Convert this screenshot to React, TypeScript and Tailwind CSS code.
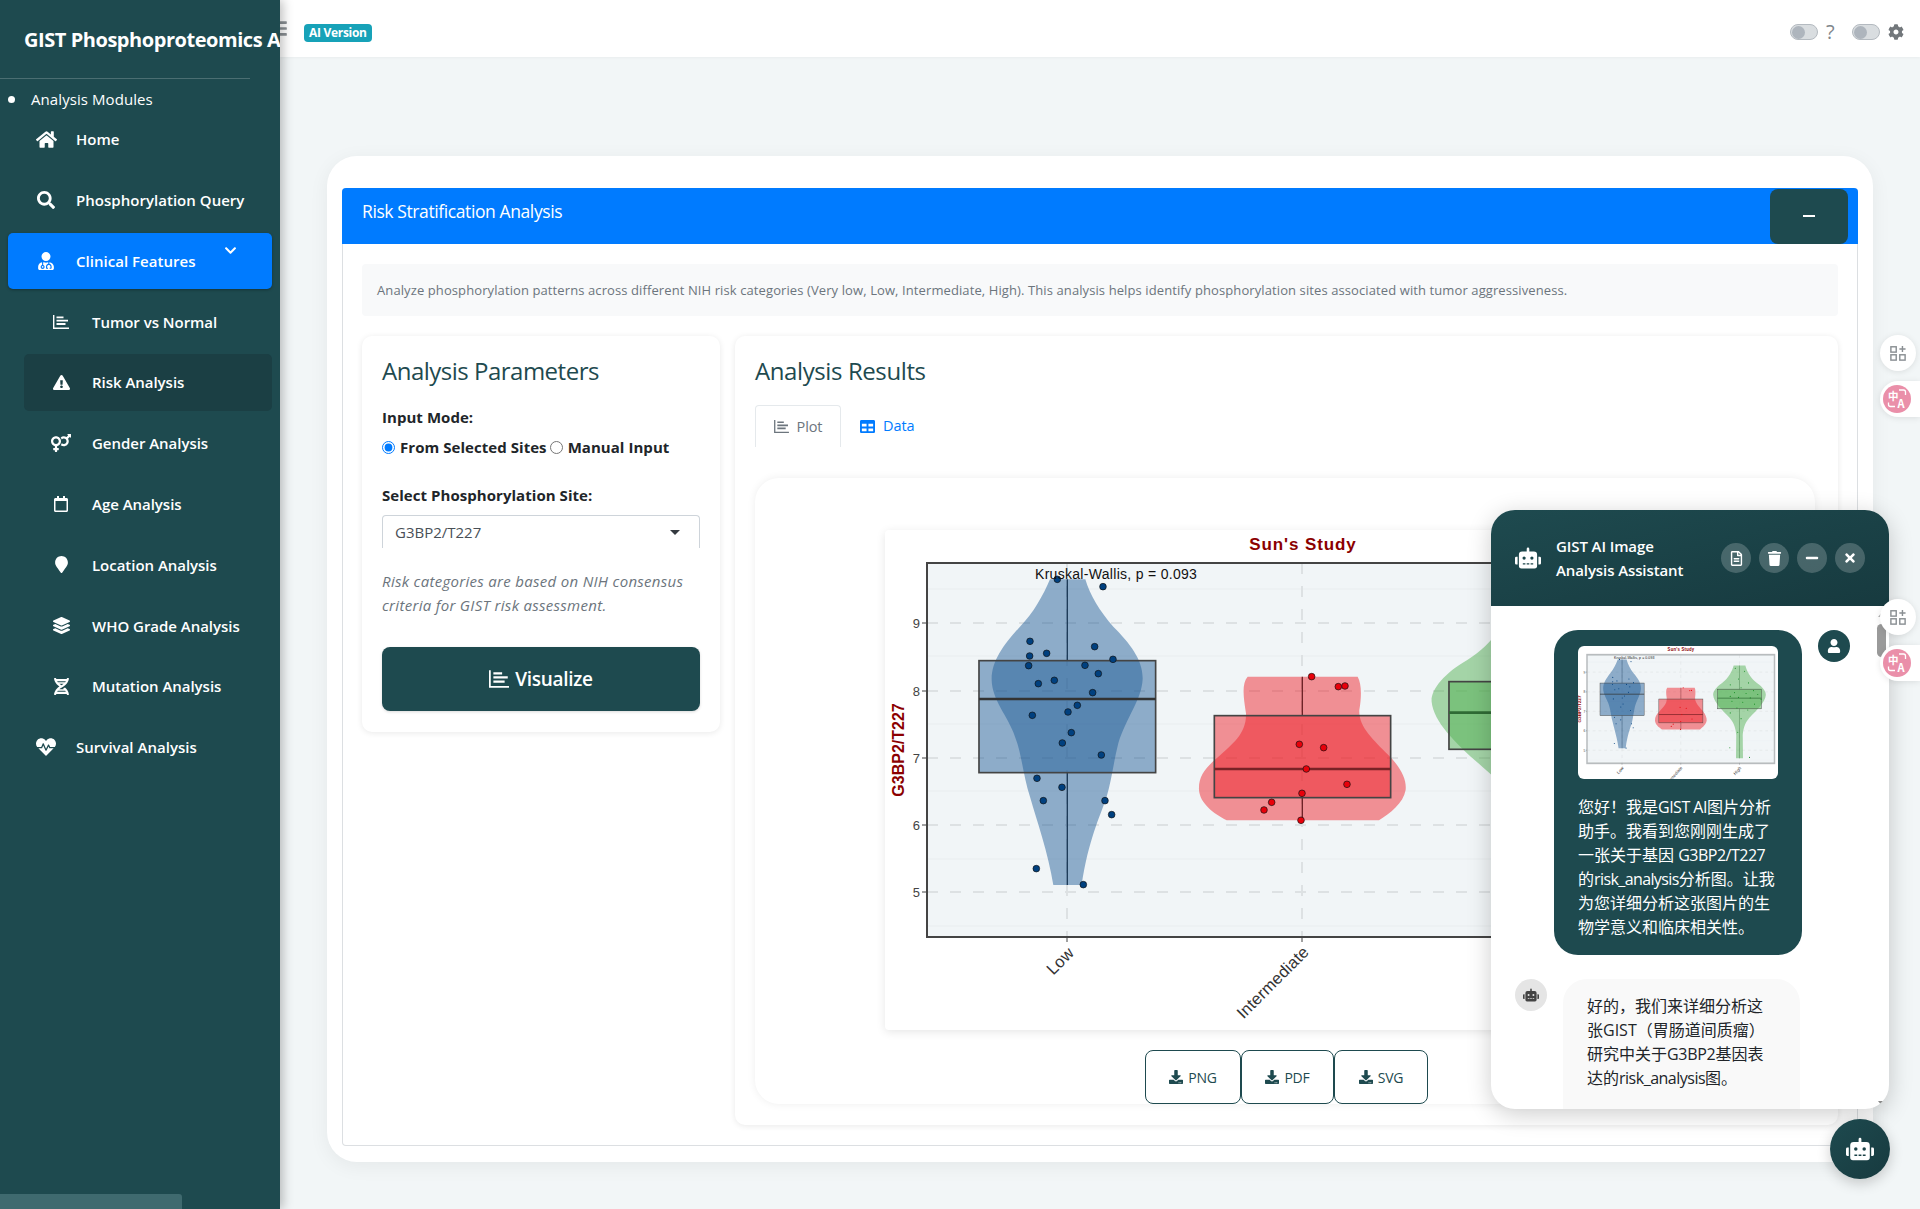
import {
  FaHome, FaSearch, FaUserMd, FaExclamationTriangle, FaVenusMars, FaRegCalendar,
  FaMapMarker, FaLayerGroup, FaDna, FaHeartbeat, FaChevronDown, FaTable, FaDownload, FaRobot,
  FaRegFileAlt, FaTrash, FaMinus, FaTimes, FaUser, FaCog, FaBars,
} from "react-icons/fa";

const lowPoints = [
  [532, 178], [669, 200], [450, 364], [644, 380], [500, 400], [449, 408], [699, 418], [615, 436], [446, 437],
  [655, 461], [523, 481], [475, 491], [638, 518], [592, 556], [564, 576], [457, 586], [574, 638], [547, 669],
  [664, 705], [471, 775], [546, 802], [490, 842], [675, 842], [695, 884], [469, 1046], [610, 1094],
];
const midPoints = [
  [395, 470], [475, 500], [495, 498], [358, 673], [431, 683], [379, 747], [501, 793], [366, 820], [275, 847],
  [252, 870], [363, 901],
];
const highPoints = [
  [1020, 270], [1130, 300], [1060, 380], [1180, 420], [960, 440], [1090, 470], [1240, 500], [1010, 520],
  [1150, 530], [1290, 540], [960, 560], [1060, 570], [1200, 575], [1330, 590], [980, 610], [1110, 620],
  [1250, 640], [1040, 680], [1170, 700], [960, 730], [1090, 790], [1050, 930], [955, 1090], [1190, 1190],
];

function ChartIcon({ className }: { className: string }) {
  return (
    <svg viewBox="0 0 16 14" className={className} fill="currentColor">
      <path d="M0 0h1.4v12.6H16V14H0z" />
      <path d="M3.5 1.5h7v1.8h-7zM3.5 4.8h11.5v1.8H3.5zM3.5 8.1h9v1.8h-9z" />
    </svg>
  );
}

function Chart({ viewBox, mini }: { viewBox: string; mini?: boolean }) {
  const pointRadius = mini ? 6 : 10;
  const pointStroke = mini ? 0 : 2;
  return (
    <svg viewBox={viewBox} preserveAspectRatio="none" className="block w-full h-full font-['Liberation_Sans',sans-serif]">
      <text x="1303" y="550" textAnchor="middle" fontSize="17" fontWeight="700" fill="#8b0000" letterSpacing="0.9">Sun's Study</text>
      <rect x="927" y="563" width="750" height="374" fill="#f1f5f7" />
      {[589, 656, 724, 791, 859, 926].map((y) => (
        <line key={y} x1="927" x2="1677" y1={y} y2={y} stroke="#e9edef" strokeWidth="1" />
      ))}
      {[623, 691, 758, 825, 892].map((y) => (
        <line key={y} x1="927" x2="1677" y1={y} y2={y} stroke="#dde1e3" strokeWidth="2" strokeDasharray="11 12" />
      ))}
      {[1067, 1302, 1537].map((x) => (
        <line key={x} x1={x} x2={x} y1="563" y2="937" stroke="#dde1e3" strokeWidth="2" strokeDasharray="11 12" />
      ))}

      <g transform="translate(880 520) scale(0.3333)">
        <path d="M510 178 L616 178 C630 225 660 275 700 320 C750 370 790 420 788 478 C785 540 740 590 715 670 C700 730 695 780 680 830 C660 890 625 960 605 1095 L520 1095 C505 1000 470 900 450 830 C430 770 425 700 405 650 C385 590 335 540 335 478 C335 420 375 370 420 320 C460 280 490 225 510 178 Z" fill="#1f5b96" fillOpacity="0.48" />
        <path d="M562 178V422M562 758V1095" stroke="#1d3a58" strokeWidth="4" />
        <rect x="297" y="422" width="530" height="336" fill="#1f5b96" fillOpacity="0.48" stroke="#444" strokeWidth="5" />
        <line x1="297" x2="827" y1="537" y2="537" stroke="#333" strokeWidth="8" />
        {lowPoints.map(([x, y]) => (
          <circle key={`${x}-${y}`} cx={x} cy={y} r={pointRadius} fill="#00407f" stroke="#111" strokeWidth={pointStroke} />
        ))}
      </g>

      <g transform="translate(1180 520) scale(0.3333)">
        <path d="M203 470 L533 470 C545 490 545 530 538 570 C535 620 580 660 625 705 C665 745 680 780 677 810 C670 850 630 880 597 901 L140 901 C100 880 60 850 57 810 C55 770 75 745 110 715 C160 670 200 640 198 580 C190 530 185 490 203 470 Z" fill="#ee2027" fillOpacity="0.48" />
        <path d="M367 470V587M367 833V901" stroke="#6d2226" strokeWidth="4" />
        <rect x="103" y="587" width="529" height="246" fill="#ee2027" fillOpacity="0.48" stroke="#444" strokeWidth="5" />
        <line x1="103" x2="632" y1="747" y2="747" stroke="#7a2226" strokeWidth="8" />
        {midPoints.map(([x, y]) => (
          <circle key={`${x}-${y}`} cx={x} cy={y} r={pointRadius} fill="#e8000a" stroke="#111" strokeWidth={pointStroke} />
        ))}

        <path d="M1001 240 L1141 240 C1160 300 1200 370 1280 420 C1350 460 1390 510 1387 545 C1380 620 1280 700 1190 780 C1130 840 1115 900 1110 960 L1113 1200 L1029 1200 L1032 960 C1027 900 1012 840 952 780 C862 700 762 620 755 545 C752 510 792 460 862 420 C942 370 982 300 1001 240 Z" fill="#4fb04f" fillOpacity="0.48" />
        <path d="M1071 240V485M1071 688V1200" stroke="#2f6b35" strokeWidth="4" />
        <rect x="807" y="485" width="528" height="203" fill="#4fb04f" fillOpacity="0.48" stroke="#444" strokeWidth="5" />
        <line x1="807" x2="1335" y1="578" y2="578" stroke="#2f6b35" strokeWidth="8" />
        {highPoints.map(([x, y]) => (
          <circle key={`${x}-${y}`} cx={x} cy={y} r={pointRadius} fill="#0f8a1e" stroke="#111" strokeWidth={pointStroke} />
        ))}
      </g>

      <rect x="927" y="563" width="750" height="374" fill="none" stroke={mini ? "#b8bcbe" : "#444"} strokeWidth={mini ? 6 : 2} />
      <text x="1035" y="579" fontSize="14" fill="#111" letterSpacing="0.3">Kruskal-Wallis, p = 0.093</text>
      {[["9", 623], ["8", 691], ["7", 758], ["6", 825], ["5", 892]].map(([label, y]) => (
        <g key={label}>
          <text x="920" y={Number(y) + 5} textAnchor="end" fontSize="13" fill="#444">{label}</text>
          <line x1="922" x2="927" y1={y} y2={y} stroke="#444" strokeWidth="1" />
        </g>
      ))}
      {[1067, 1302, 1537].map((x) => (
        <line key={x} x1={x} x2={x} y1="937" y2="942" stroke="#444" strokeWidth="1" />
      ))}
      <text transform="translate(904 750) rotate(-90)" textAnchor="middle" fontSize="16" fontWeight="700" fill="#8b0000">G3BP2/T227</text>
      <text transform="translate(1075 954) rotate(-45)" textAnchor="end" fontSize="16.5" letterSpacing="0.2" fill="#333">Low</text>
      <text transform="translate(1310 953) rotate(-45)" textAnchor="end" fontSize="16.5" letterSpacing="0.2" fill="#333">Intermediate</text>
      <text transform="translate(1545 954) rotate(-45)" textAnchor="end" fontSize="16.5" letterSpacing="0.2" fill="#333">High</text>
    </svg>
  );
}

const navItems = [
  { label: "Home", icon: <FaHome className="text-[21px]" /> },
  { label: "Phosphorylation Query", icon: <FaSearch className="text-[18px]" /> },
  { label: "Clinical Features", icon: <FaUserMd className="text-[18px]" />, active: true },
  { label: "Tumor vs Normal", icon: <ChartIcon className="w-4 h-[14px]" />, sub: true },
  { label: "Risk Analysis", icon: <FaExclamationTriangle className="text-[17px]" />, sub: true, current: true },
  { label: "Gender Analysis", icon: <FaVenusMars className="text-[20px]" />, sub: true },
  { label: "Age Analysis", icon: <FaRegCalendar className="text-[16px]" />, sub: true },
  { label: "Location Analysis", icon: <FaMapMarker className="text-[17px]" />, sub: true },
  { label: "WHO Grade Analysis", icon: <FaLayerGroup className="text-[17px]" />, sub: true },
  { label: "Mutation Analysis", icon: <FaDna className="text-[17px]" />, sub: true },
  { label: "Survival Analysis", icon: <FaHeartbeat className="text-[20px]" /> },
];

function Sidebar() {
  return (
    <aside className="relative z-20 w-[280px] shrink-0 overflow-hidden bg-[#1e4a4f] text-white shadow-[3px_0_10px_rgba(0,0,0,0.25)]">
      <div className="h-[78px] pl-6 pt-[26px] text-[20px] leading-7 font-bold whitespace-nowrap tracking-[-0.45px]">GIST Phosphoproteomics Analysis</div>
      <div className="w-[250px] h-px bg-white/20" />
      <div className="mt-2 pl-2 flex items-center text-[15px] leading-6 tracking-[0.08px]">
        <span className="w-[7px] h-[7px] rounded-full bg-white" />
        <span className="ml-4">Analysis Modules</span>
      </div>
      <nav className="flex flex-col">
        {navItems.map((item) => (
          <div
            key={item.label}
            className={`h-[56.8px] mb-1 flex items-center rounded-[5px] text-[15px] font-semibold ${item.sub ? "ml-6 mr-2 pl-[22px] tracking-[-0.03px]" : "mx-2 pl-[23px] tracking-[0.03px]"} ${item.active ? "bg-[#007bff] shadow-[0_1px_3px_rgba(0,0,0,0.3)]" : ""} ${item.current ? "bg-[#1b3f44]" : ""}`}
          >
            <span className="w-[30px] flex justify-center">{item.icon}</span>
            <span className={item.sub ? "ml-4" : "ml-[15px]"}>{item.label}</span>
            {item.active && <FaChevronDown className="ml-auto mr-[35px] mb-5 text-[13px]" />}
          </div>
        ))}
      </nav>
      <div className="absolute left-0 bottom-0 w-[182px] h-[15px] rounded-tr-[3px] bg-[#3f6a6f]" />
    </aside>
  );
}

function Toggle() {
  return (
    <span className="w-7 h-4 rounded-full bg-[#d9dde0] border border-[#b4bac0] flex items-center">
      <span className="w-[13px] h-[13px] rounded-full bg-[#aeb5bd] ml-px" />
    </span>
  );
}

function TopBar() {
  return (
    <header className="h-[57px] bg-white flex items-center shadow-[0_1px_3px_rgba(0,0,0,0.04)]">
      <FaBars className="ml-[-11px] text-[19px] text-[#8a9094]" />
      <span className="ml-[16px] mt-[9px] h-[18px] px-[5px] rounded-[4px] bg-[#17a2b8] text-white text-[12px] leading-[18px] font-bold tracking-[-0.3px]">AI Version</span>
      <div className="ml-auto mr-4 mt-[7px] flex items-center">
        <Toggle />
        <span className="ml-2 w-[26px] text-[20px] leading-5 text-[#80868b]">?</span>
        <Toggle />
        <FaCog className="ml-2 text-[16px] text-[#72777b]" />
      </div>
    </header>
  );
}

function Parameters() {
  return (
    <section className="w-[358px] h-[396px] shrink-0 rounded-[10px] bg-white px-5 pt-[19px] shadow-[0_1px_6px_rgba(0,0,0,0.09)]">
      <h2 className="text-[24px] leading-8 text-[#1e4a4f] font-medium tracking-[-0.5px]">Analysis Parameters</h2>
      <div className="mt-[18px] text-[15px] leading-6 font-bold text-[#212529] tracking-[0.05px]">Input Mode:</div>
      <div className="mt-[6px] flex items-center text-[15px] leading-6 font-bold text-[#212529] tracking-[0.05px]">
        <input type="radio" name="mode" defaultChecked className="w-[13px] h-[13px] m-0 accent-[#007bff]" />
        <span className="ml-[5px]">From Selected Sites</span>
        <input type="radio" name="mode" className="w-[13px] h-[13px] m-0 ml-[3px]" />
        <span className="ml-[5px]">Manual Input</span>
      </div>
      <div className="mt-6 text-[15px] leading-6 font-bold text-[#212529] tracking-[0.05px]">Select Phosphorylation Site:</div>
      <div className="mt-[8px] h-[33px] flex items-center justify-between rounded-t-[4px] border border-b-0 border-[#ced4da] pl-[12px] pr-[19px] text-[15px] text-[#495057]">
        <span>G3BP2/T227</span>
        <span className="w-0 h-0 border-x-[5px] border-x-transparent border-t-[5px] border-t-[#343a40]" />
      </div>
      <p className="mt-[21px] text-[15px] leading-6 italic text-[#6c757d] tracking-[0.3px] whitespace-nowrap">
        Risk categories are based on NIH consensus<br />criteria for GIST risk assessment.
      </p>
      <button className="mt-[30px] w-full h-16 rounded-[8px] bg-[#1e4a4f] text-white text-[19px] font-semibold tracking-[-0.3px] flex items-center justify-center gap-[6px] shadow-[0_1px_3px_rgba(0,0,0,0.15)]">
        <ChartIcon className="w-5 h-[18px]" /> Visualize
      </button>
    </section>
  );
}

function Results() {
  return (
    <section className="flex-1 h-[789px] rounded-[10px] bg-white px-5 pt-[19px] shadow-[0_1px_6px_rgba(0,0,0,0.09)]">
      <h2 className="text-[24px] leading-8 text-[#1e4a4f] font-medium tracking-[-0.4px]">Analysis Results</h2>
      <div className="mt-[18px] h-[42px] flex items-center text-[14.5px] tracking-[-0.1px]">
        <div className="w-[86px] h-full flex items-center justify-center gap-2 rounded-t-[4px] border border-b-0 border-[#e5e9ec] text-[#6c757d]">
          <ChartIcon className="w-[15px] h-[13px]" /> Plot
        </div>
        <div className="ml-[19px] flex items-center gap-2 text-[#007bff]">
          <FaTable className="text-[15px]" /> Data
        </div>
      </div>
      <div className="mt-[31px] w-[1060px] h-[626px] relative rounded-[24px] bg-white pt-[52px] flex flex-col items-center shadow-[0_0_8px_rgba(0,0,0,0.07)]">
        <div className="w-[800px] h-[500px] bg-white rounded-[4px] shadow-[0_2px_10px_rgba(0,0,0,0.1)]">
          <Chart viewBox="885 530 800 500" />
        </div>
        <div className="mt-5 ml-[3px] flex text-[14px] text-[#1e4a4f]">
          {[["PNG", "w-[96px]"], ["PDF", "w-[93px]"], ["SVG", "w-[94px]"]].map(([label, width]) => (
            <button key={label} className={`${width} h-[54px] rounded-[8px] border border-[#1e4a4f] bg-white flex items-center justify-center gap-[5px] tracking-[-0.2px]`}>
              <FaDownload className="text-[14px]" /> {label}
            </button>
          ))}
        </div>
      </div>
    </section>
  );
}

function ChatPanel() {
  return (
    <div className="absolute z-30 left-[1491px] top-[510px] w-[398px] h-[599px] overflow-hidden rounded-[24px] bg-white flex flex-col shadow-[0_5px_25px_rgba(0,0,0,0.2)]">
      <div className="h-[96px] shrink-0 pl-6 pr-6 flex items-center bg-gradient-to-br from-[#1e4a4f] to-[#173a3f] text-white">
        <FaRobot className="text-[26px] shrink-0" />
        <div className="ml-[15px] text-[15px] leading-6 font-semibold tracking-[-0.1px] whitespace-nowrap">
          GIST AI Image<br />Analysis Assistant
        </div>
        <div className="ml-auto flex gap-2">
          <span className="w-[30px] h-[30px] rounded-full bg-white/20 flex items-center justify-center text-[15px]"><FaRegFileAlt /></span>
          <span className="w-[30px] h-[30px] rounded-full bg-white/20 flex items-center justify-center text-[15px]"><FaTrash /></span>
          <span className="w-[30px] h-[30px] rounded-full bg-white/20 flex items-center justify-center text-[14px]"><FaMinus /></span>
          <span className="w-[30px] h-[30px] rounded-full bg-white/20 flex items-center justify-center text-[14px]"><FaTimes /></span>
        </div>
      </div>
      <div className="flex-1 overflow-hidden relative">
        <div className="pt-6 pr-[39px] flex justify-end gap-4">
          <div className="w-[248px] rounded-[24px] bg-[#1e4a4f] px-6 pt-4 pb-4 text-white text-[16px] leading-6 whitespace-nowrap">
            <div className="w-[200px] h-[133px] rounded-[6px] overflow-hidden bg-white">
              <Chart viewBox="891 533 800 458" mini />
            </div>
            <p className="mt-[16px]">
              {"您好\uFF01我是"}<span className="tracking-[-0.5px]">GIST AI</span>{"图片分析"}<br />
              助手。我看到您刚刚生成了<br />
              一张关于基因 <span className="tracking-[-0.5px]">G3BP2/T227</span><br />
              的<span className="tracking-[-0.6px]">risk_analysis</span>分析图。让我<br />
              为您详细分析这张图片的生<br />
              物学意义和临床相关性。
            </p>
          </div>
          <div className="w-8 h-8 shrink-0 rounded-full bg-[#1e4a4f] text-white flex items-center justify-center text-[14px]"><FaUser /></div>
        </div>
        <div className="mt-6 pl-6 flex gap-4">
          <div className="w-8 h-8 shrink-0 rounded-full bg-[#e5e5e5] text-[#444] flex items-center justify-center text-[16px]"><FaRobot /></div>
          <div className="w-[237px] h-[160px] rounded-[24px] bg-[#f9f9f9] pl-6 pt-[15px] text-[16px] leading-6 text-[#212529] whitespace-nowrap">
            {"好的\uFF0C我们来详细分析这"}<br />
            {"张GIST\uFF08胃肠道间质瘤\uFF09"}<br />
            研究中关于<span className="tracking-[-0.3px]">G3BP2</span>基因表<br />
            达的<span className="tracking-[-0.5px]">risk_analysis</span>图。
          </div>
        </div>
        <div className="absolute right-[3px] top-[6px] w-0 h-0 border-x-[4px] border-x-transparent border-b-[5px] border-b-[#b5b5b5]" />
        <div className="absolute right-[3px] top-[18px] w-[9px] h-[33px] rounded-full bg-[#9a9a9a]" />
        <div className="absolute right-[3px] bottom-[3px] w-0 h-0 border-x-[4px] border-x-transparent border-t-[5px] border-t-[#8a8a8a]" />
      </div>
    </div>
  );
}

function GridPlusIcon() {
  return (
    <svg viewBox="0 0 18 18" className="w-[16px] h-[16px]" fill="none" stroke="#8a8f93" strokeWidth="1.6">
      <rect x="1" y="2" width="6" height="6" />
      <rect x="1" y="11" width="6" height="6" />
      <rect x="11" y="11" width="6" height="6" />
      <path d="M14 1v7M10.5 4.5h7" />
    </svg>
  );
}

function TranslateIcon() {
  return (
    <svg viewBox="0 0 28 28" className="w-7 h-7 ml-[1px] font-['Noto_Sans_CJK_SC',sans-serif]">
      <circle cx="14" cy="14" r="14" fill="#ea8fa9" />
      <text x="5" y="15" fontSize="10.5" fontWeight="700" fill="#fff">中</text>
      <text x="14.5" y="23" fontSize="11" fontWeight="700" fill="#fff">A</text>
      <path d="M16 5h4.5a2 2 0 0 1 2 2v3M5.5 17.5v2a2 2 0 0 0 2 2H12" fill="none" stroke="#fff" strokeWidth="1.3" />
    </svg>
  );
}

function FloatingTools({ top }: { top: string }) {
  return (
    <div className={`absolute z-40 right-0 w-10 flex flex-col ${top}`}>
      <div className="w-9 h-9 rounded-full bg-white shadow-[0_1px_6px_rgba(0,0,0,0.1)] flex items-center justify-center"><GridPlusIcon /></div>
      <div className="mt-[10px] h-9 rounded-l-full bg-white shadow-[0_1px_6px_rgba(0,0,0,0.1)] flex items-center pl-[2px]">
        <TranslateIcon />
      </div>
    </div>
  );
}

export default function App() {
  return (
    <div className="relative flex h-[1209px] overflow-hidden bg-[#f2f6f7] font-['Open_Sans','Noto_Sans_CJK_SC',sans-serif]">
      <Sidebar />
      <div className="flex-1 min-w-0">
        <TopBar />
        <main className="px-[47px] pt-[99px]">
          <div className="h-[1006px] rounded-[30px] bg-white px-[15px] pt-8 pb-4 shadow-[0_4px_20px_rgba(0,0,0,0.06)]">
            <div className="h-[958px] rounded-[4px] border-b border-x border-[#dcdfe2]">
              <div className="h-14 -mx-px pl-5 pr-[10px] flex items-center justify-between rounded-t-[4px] bg-[#007bff] text-white">
                <span className="text-[17.5px] tracking-[-0.4px] mb-[10px]">Risk Stratification Analysis</span>
                <button className="w-[78px] h-[55px] rounded-[8px] bg-[#1e4a4f] flex items-center justify-center"><span className="w-3 h-[2px] bg-white" /></button>
              </div>
              <div className="px-[19px] py-5">
                <div className="h-[52px] pl-[15px] pt-px flex items-center rounded-[4px] bg-[#f8f9fa] text-[13px] text-[#6c757d] tracking-[0.1px] whitespace-nowrap">
                  Analyze phosphorylation patterns across different NIH risk categories (Very low, Low, Intermediate, High). This analysis helps identify phosphorylation sites associated with tumor aggressiveness.
                </div>
                <div className="mt-5 flex gap-[15px] items-start">
                  <Parameters />
                  <Results />
                </div>
              </div>
            </div>
          </div>
        </main>
      </div>
      <ChatPanel />
      <FloatingTools top="top-[335px]" />
      <FloatingTools top="top-[599px]" />
      <button className="absolute z-30 right-[30px] bottom-[30px] w-[60px] h-[60px] rounded-full bg-gradient-to-br from-[#1e4a4f] to-[#173a3f] text-white flex items-center justify-center text-[28px] shadow-[0_4px_14px_rgba(0,0,0,0.2)]"><FaRobot /></button>
    </div>
  );
}
